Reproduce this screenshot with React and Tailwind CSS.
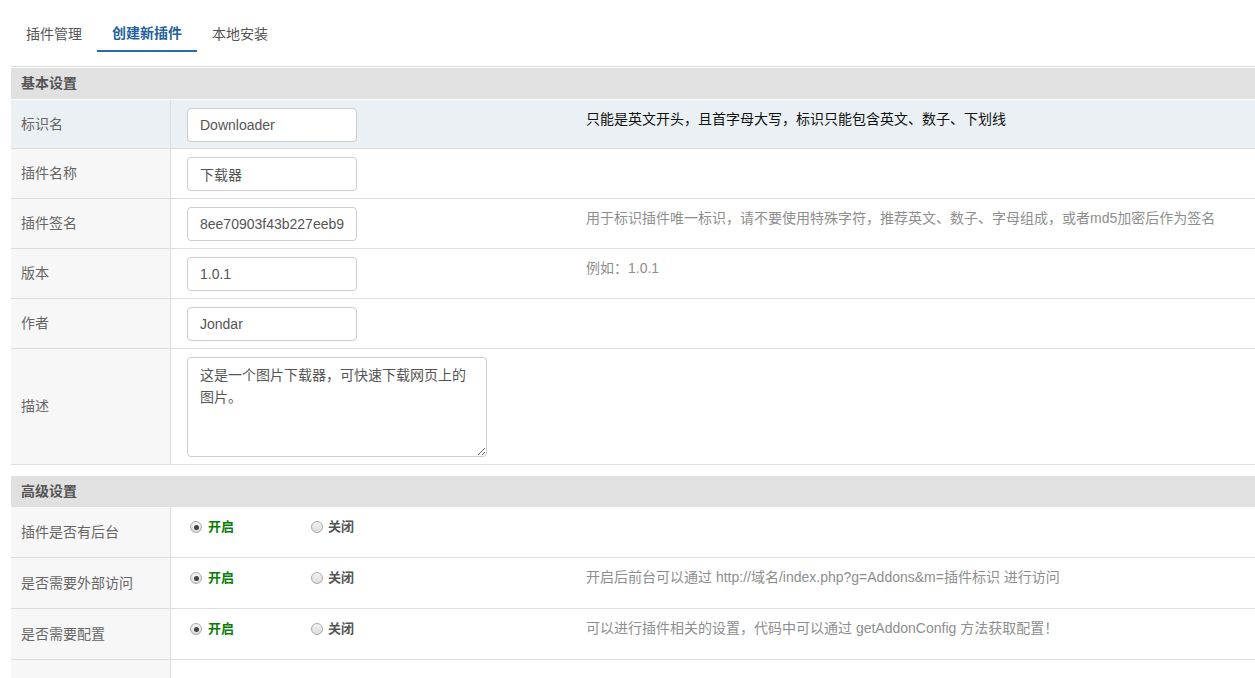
import React from "react";

const basicRows = [
  { label: "插件名称", value: "下载器" },
  { label: "插件签名", value: "8ee70903f43b227eeb9", tip: "用于标识插件唯一标识，请不要使用特殊字符，推荐英文、数子、字母组成，或者md5加密后作为签名" },
  { label: "版本", value: "1.0.1", tip: "例如：1.0.1" },
  { label: "作者", value: "Jondar" },
];

const advancedRows = [
  { label: "插件是否有后台" },
  { label: "是否需要外部访问", tip: "开启后前台可以通过 http://域名/index.php?g=Addons&m=插件标识 进行访问" },
  { label: "是否需要配置", tip: "可以进行插件相关的设置，代码中可以通过 getAddonConfig 方法获取配置！" },
];

function Radio({ checked }) {
  return (
    <span className="w-[12px] h-[12px] rounded-full border border-[#a9a9a9] bg-gradient-to-b from-[#f4f4f4] to-[#dcdcdc] flex items-center justify-center">
      {checked && <span className="w-[5px] h-[5px] rounded-full bg-[#444]" />}
    </span>
  );
}

function SectionHeader({ children }) {
  return (
    <div className="h-[31px] bg-[#e1e1e1] flex items-center px-[10px] text-[14px] font-bold text-[#555]">
      {children}
    </div>
  );
}

function Row({ label, height, hover, center, children, tip }) {
  return (
    <div className={`flex border-b border-[#ddd] ${height} ${hover ? "bg-[#ebf0f4]" : "bg-white"}`}>
      <div className={`w-[160px] shrink-0 border-r border-[#ddd] flex items-center px-[10px] text-[14px] text-[#666] ${hover ? "bg-[#ebf0f4]" : "bg-[#f7f7f7]"}`}>
        {label}
      </div>
      <div className={`w-[399px] shrink-0 pl-[16px] pr-[15px] flex ${center ? "items-center" : "pt-[8px]"}`}>
        {children}
      </div>
      <div className={`flex-1 px-[16px] pt-[9px] text-[14px] leading-[20px] whitespace-nowrap ${hover ? "text-[#111]" : "text-[#8e8e8e]"}`}>
        {tip}
      </div>
    </div>
  );
}

function TextInput({ value }) {
  return (
    <input
      readOnly
      value={value}
      className="w-[170px] h-[34px] border border-[#ccc] rounded-[4px] px-[12px] text-[14px] text-[#555] bg-white outline-none"
    />
  );
}

export default function App() {
  return (
    <div className="w-[1255px] h-[678px] overflow-hidden bg-white font-['Liberation_Sans','Noto_Sans_CJK_SC',sans-serif]">
      {/* Tabs */}
      <div className="flex pl-[11px] pt-[17px] h-[66px] text-[14px]">
        <div className="px-[15px] h-[35px] flex items-center text-[#555]">插件管理</div>
        <div className="px-[15px] h-[35px] flex items-center text-[#23629c] font-bold border-b-2 border-[#2a6aa8]">创建新插件</div>
        <div className="px-[15px] h-[35px] flex items-center text-[#555]">本地安装</div>
      </div>

      <div className="ml-[11px] w-[1260px]">
        <div className="border-t border-[#dcdcdc] pt-px">
          <SectionHeader>基本设置</SectionHeader>
        </div>
        <div className="h-px bg-white" />
        <Row label="标识名" height="h-[49px]" hover tip="只能是英文开头，且首字母大写，标识只能包含英文、数子、下划线">
          <TextInput value="Downloader" />
        </Row>
        {basicRows.map((r) => (
          <Row key={r.label} label={r.label} height="h-[50px]" tip={r.tip}>
            <TextInput value={r.value} />
          </Row>
        ))}
        <Row label="描述" height="h-[116px]">
          <textarea
            readOnly
            value="这是一个图片下载器，可快速下载网页上的图片。"
            className="w-[300px] h-[100px] border border-[#ccc] rounded-[4px] px-[12px] py-[6px] text-[14px] leading-[22px] text-[#555] bg-white outline-none resize-y"
          />
        </Row>

        <div className="h-[11px] bg-white" />
        <SectionHeader>高级设置</SectionHeader>
        {advancedRows.map((r) => (
          <Row key={r.label} label={r.label} height="h-[51px]" tip={r.tip}>
            <div className="flex pt-[4px] pl-[3px] text-[13px] font-bold h-[20px] items-center">
              <div className="w-[121px] flex items-center gap-[6px]">
                <Radio checked />
                <span className="text-[#0a7d0a]">开启</span>
              </div>
              <div className="flex items-center gap-[5px]">
                <Radio />
                <span className="text-[#555]">关闭</span>
              </div>
            </div>
          </Row>
        ))}
        <Row label="" height="h-[51px]" />
      </div>
    </div>
  );
}
